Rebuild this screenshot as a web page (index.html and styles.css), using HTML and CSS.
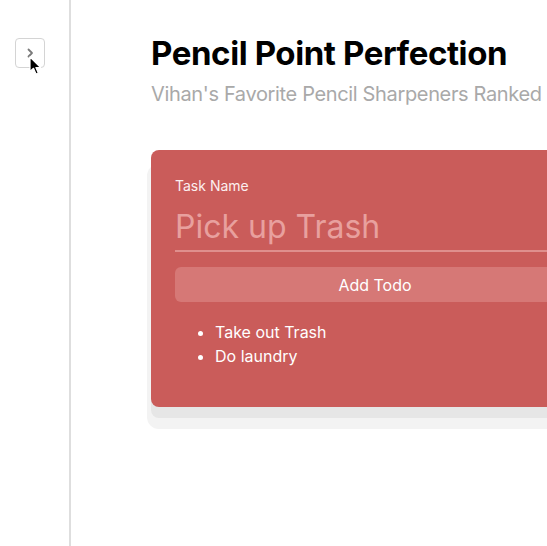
FILE: index.html
```html
<!DOCTYPE html>
<html>
<head>
<meta charset="utf-8">
<link rel="stylesheet" href="styles.css">
</head>
<body>
<div class="layout">
  <aside class="sidebar">
    <button class="toggle" aria-label="Open sidebar">
      <svg width="10" height="10" viewBox="0 0 10 10"><path d="M3.5 1.5 L7 5 L3.5 8.5" fill="none" stroke="#7a7a7a" stroke-width="1.8" stroke-linecap="round" stroke-linejoin="round"/></svg>
    </button>
    <svg class="cursor" width="14" height="20" viewBox="0 0 14 20"><path d="M1 1 L1 15.5 L4.5 12.3 L7 18 L9.3 17 L6.9 11.5 L11.6 11.5 Z" fill="#000" stroke="#fff" stroke-width="1.2" stroke-linejoin="round"/></svg>
  </aside>
  <main class="main">
    <h1 class="title">Pencil Point Perfection</h1>
    <p class="subtitle">Vihan's Favorite Pencil Sharpeners Ranked</p>
    <section class="card">
      <label class="label" for="task">Task Name</label>
      <input class="input" id="task" type="text" placeholder="Pick up Trash">
      <button class="add">Add Todo</button>
      <ul class="todos">
        <li>Take out Trash</li>
        <li>Do laundry</li>
      </ul>
    </section>
  </main>
</div>
</body>
</html>
```
FILE: styles.css
```css
html, body {
  margin: 0;
  padding: 0;
  overflow: hidden;
  background: #fff;
  font-family: Inter, "Liberation Sans", sans-serif;
}
.layout {
  display: flex;
  height: 546px;
}
.sidebar {
  position: relative;
  width: 69px;
  flex: none;
  border-right: 2px solid #dedede;
  box-sizing: content-box;
}
.toggle {
  margin: 38px 0 0 15px;
  width: 30px;
  height: 30px;
  border: 1px solid #d4d4d4;
  border-radius: 4px;
  background: #fff;
  display: flex;
  align-items: center;
  justify-content: center;
  padding: 0;
}
.cursor {
  position: absolute;
  left: 29px;
  top: 56px;
}
.main {
  padding: 33px 0 0 80px;
  flex: none;
}
.title {
  margin: 0;
  font-size: 33px;
  font-weight: 700;
  color: #000;
  line-height: 40px;
  letter-spacing: -0.4px;
}
.subtitle {
  margin: 7px 0 0;
  font-size: 20px;
  color: #a9a9a9;
  line-height: 28px;
  letter-spacing: -0.35px;
}
.card {
  margin-top: 42px;
  width: 400px;
  background: #ca5c5a;
  border-radius: 8px;
  padding: 27px 24px 39px;
  box-shadow: 0 11px 0 0 #e6e6e6, 0 18px 0 4px #f3f3f3;
  display: flex;
  flex-direction: column;
}
.label {
  font-size: 14px;
  color: #fcefef;
  line-height: 18px;
}
.input {
  margin-top: 12px;
  background: transparent;
  border: none;
  border-bottom: 2px solid #df8f8d;
  font-family: inherit;
  font-size: 32px;
  padding: 0 0 3px;
  color: #fff;
  outline: none;
  line-height: 40px;
}
.input::placeholder {
  color: #e8a09e;
}
.add {
  margin-top: 15px;
  height: 35px;
  border: none;
  border-radius: 6px;
  background: #d67876;
  color: #fff;
  font-family: inherit;
  font-size: 16px;
}
.todos {
  margin: 18px 0 0;
  padding-left: 40px;
  color: #fff;
  font-size: 16px;
  line-height: 24px;
}
```
